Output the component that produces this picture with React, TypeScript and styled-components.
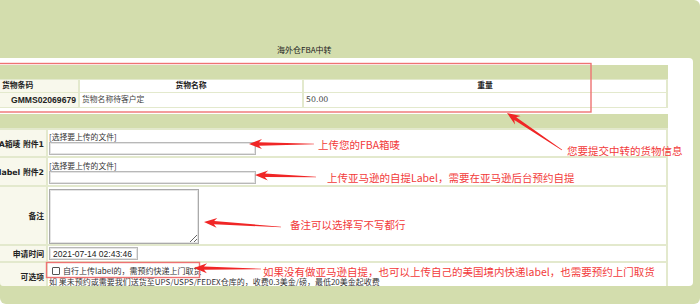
import React from 'react';
import styled, { createGlobalStyle } from 'styled-components';

const GREEN = '#d3ddad';
const LINE = '#e3e9cd';
const CREAM = '#f8f8ec';
const RED = '#f23a3a';

const GlobalStyle = createGlobalStyle`
	html, body { margin: 0; padding: 0; background: #fff; overflow: hidden; }
	body { font-family: "DejaVu Sans", "Noto Sans CJK SC", sans-serif; }
`;

const Frame = styled.div`
	position: relative;
	width: 700px;
	height: 304px;
	background: ${GREEN};
	border-radius: 0 6px 6px 6px;
	overflow: hidden;
`;

const TitleBar = styled.div`
	height: 58px;
	box-sizing: border-box;
	display: flex;
	align-items: flex-end;
	padding: 0 0 3px 277px;
`;

const Title = styled.span`
	font-family: "Noto Sans CJK SC", sans-serif;
	font-size: 8px;
	line-height: 10px;
	color: #222;
`;

const Panel = styled.div`
	width: 693px;
	height: 228px;
	box-sizing: border-box;
	padding-top: 7px;
	background: #fff;
	border-radius: 0 4px 4px 4px;
	overflow: hidden;
`;

const Grid = styled.div<{ $cols: string; $gap: number; $top: number }>`
	display: grid;
	grid-template-columns: ${(p) => p.$cols};
	gap: ${(p) => p.$gap}px 2px;
	width: 668px;
	box-sizing: border-box;
	margin-top: ${(p) => p.$top}px;
	padding: 0 2px 1px 0;
	background: ${LINE};
	font-size: 7.8px;
	color: #333;
`;

const Caption = styled.div`
	grid-column: 1 / -1;
	height: 14px;
	margin-right: -2px;
	background: ${GREEN};
`;

const Cell = styled.div<{ $h: number; $align?: string; $bold?: boolean; $cream?: boolean }>`
	height: ${(p) => p.$h}px;
	line-height: ${(p) => p.$h}px;
	padding: 0 2px;
	text-align: ${(p) => p.$align || 'left'};
	font-weight: ${(p) => (p.$bold ? 'bold' : 'normal')};
	background: ${(p) => (p.$cream ? CREAM : '#fff')};
	color: ${(p) => (p.$bold ? '#222' : '#444')};
	white-space: nowrap;
`;

const Code = styled.span`
	font-family: "Liberation Sans", sans-serif;
	font-size: 8.6px;
`;

const Label = styled.div<{ $h: number }>`
	height: ${(p) => p.$h}px;
	display: flex;
	justify-content: flex-end;
	align-items: center;
	padding-right: 2px;
	background: ${CREAM};
	font-weight: bold;
	color: #222;
	white-space: nowrap;
`;

const Field = styled.div<{ $h: number; $pad: number }>`
	height: ${(p) => p.$h}px;
	box-sizing: border-box;
	padding: ${(p) => p.$pad}px 0 0 1px;
	display: flex;
	flex-direction: column;
	align-items: flex-start;
	background: #fff;
`;

const Hint = styled.span`
	font-family: "Noto Sans CJK SC", sans-serif;
	line-height: 10px;
	color: #333;
`;

const Box = styled.input<{ $w: number }>`
	width: ${(p) => p.$w}px;
	height: 13px;
	box-sizing: border-box;
	margin: 0;
	padding: 0 3px;
	border: 1px solid #b8b8b8;
	box-shadow: inset 0 0 0 1px #e4e4e4;
	font-family: "Liberation Sans", sans-serif;
	font-size: 8.5px;
	color: #222;
	outline: none;
`;

const Memo = styled.textarea`
	width: 150px;
	height: 55px;
	box-sizing: border-box;
	margin: 0;
	border: 1px solid #aaa;
	box-shadow: inset 0 0 0 1px #e4e4e4;
	outline: none;
`;

const OptionLine = styled.div`
	display: flex;
	align-items: center;
	height: 11px;
	white-space: nowrap;
	font-family: "Noto Sans CJK SC", "DejaVu Sans", sans-serif;
	font-size: 8px;
`;

const Check = styled.input`
	appearance: none;
	width: 8px;
	height: 8px;
	margin: 0 3px 0 3px;
	border: 1px solid #555;
	border-radius: 1px;
	background: #fff;
`;

const Overlay = styled.div`
	position: absolute;
	inset: 0;
	pointer-events: none;
`;

const Note = styled.span<{ $x: number; $y: number }>`
	position: absolute;
	left: ${(p) => p.$x}px;
	top: ${(p) => p.$y - 7}px;
	font-family: "Noto Sans CJK SC", sans-serif;
	font-size: 10.5px;
	line-height: 14px;
	color: ${RED};
	white-space: nowrap;
`;

type Pt = [number, number];

// tapered arrow, like the ones drawn by screenshot tools
const arrowPoints = (tail: Pt, tip: Pt, head = 13, wing = 5, shaft = 1.7) => {
	const [x1, y1] = tail;
	const [x2, y2] = tip;
	const len = Math.hypot(x2 - x1, y2 - y1);
	const ux = (x2 - x1) / len;
	const uy = (y2 - y1) / len;
	const nx = -uy;
	const ny = ux;
	const bx = x2 - ux * head;
	const by = y2 - uy * head;
	const cx = x2 - ux * (head - 3);
	const cy = y2 - uy * (head - 3);
	const pts: Pt[] = [
		[x1 + nx * 0.3, y1 + ny * 0.3],
		[cx + nx * shaft, cy + ny * shaft],
		[bx + nx * wing, by + ny * wing],
		[x2, y2],
		[bx - nx * wing, by - ny * wing],
		[cx - nx * shaft, cy - ny * shaft],
		[x1 - nx * 0.3, y1 - ny * 0.3],
	];
	return pts.map((p) => p.map((v) => v.toFixed(1)).join(',')).join(' ');
};

const arrows: [Pt, Pt][] = [
	[[562, 150], [507, 113]],
	[[314, 144], [249, 144]],
	[[316, 177], [255, 175]],
	[[281, 227], [204, 222]],
	[[261, 269], [194, 268]],
];

const notes = [
	{ x: 318, y: 145, text: '上传您的FBA箱唛' },
	{ x: 327, y: 178, text: '上传亚马逊的自提Label，需要在亚马逊后台预约自提' },
	{ x: 290, y: 225, text: '备注可以选择写不写都行' },
	{ x: 567, y: 151, text: '您要提交中转的货物信息' },
	{ x: 263, y: 272, text: '如果没有做亚马逊自提，也可以上传自己的美国境内快递label，也需要预约上门取货' },
];

export default function App() {
	return (
		<>
			<GlobalStyle />
			<Frame>
				<TitleBar>
					<Title>海外仓FBA中转</Title>
				</TitleBar>
				<Panel>
					<Grid $cols="78px 222px 1fr" $gap={1} $top={0}>
						<Caption />
						<Cell $h={12} $bold $cream>货物条码</Cell>
						<Cell $h={12} $bold $align="center">货物名称</Cell>
						<Cell $h={12} $bold $align="center">重量</Cell>
						<Cell $h={14} $bold $cream $align="right">
							<Code>GMMS02069679</Code>
						</Cell>
						<Cell $h={14}>货物名称待客户定</Cell>
						<Cell $h={14}>50.00</Cell>
					</Grid>

					<Grid $cols="46px 1fr" $gap={2} $top={6}>
						<Caption />
						<Label $h={26}>FBA箱唛 附件1</Label>
						<Field $h={26} $pad={2}>
							<Hint>[选择要上传的文件]</Hint>
							<Box $w={207} readOnly />
						</Field>
						<Label $h={27}>自提label 附件2</Label>
						<Field $h={27} $pad={3}>
							<Hint>[选择要上传的文件]</Hint>
							<Box $w={207} readOnly />
						</Field>
						<Label $h={57}>备注</Label>
						<Field $h={57} $pad={2}>
							<Memo />
						</Field>
						<Label $h={15}>申请时间</Label>
						<Field $h={15} $pad={1}>
							<Box $w={89} readOnly value="2021-07-14 02:43:46" />
						</Field>
						<Label $h={26}>可选项</Label>
						<Field $h={30} $pad={2}>
							<OptionLine>
								<Check type="checkbox" />
								自行上传label的，需预约快递上门取货
							</OptionLine>
							<OptionLine>如 果未预约或需要我们送货至UPS/USPS/FEDEX仓库的，收费0.3美金/磅，最低20美金起收费</OptionLine>
						</Field>
					</Grid>
				</Panel>

				<Overlay>
					<svg width="700" height="304" viewBox="0 0 700 304">
						<rect x="-4" y="63.5" width="595" height="48.5" fill="none" stroke="#ee7272" strokeWidth="1.4" />
						<rect x="46.5" y="262.5" width="153" height="15" fill="none" stroke="#ee7272" strokeWidth="1.4" />
						{arrows.map(([tail, tip], i) => (
							<polygon key={i} points={arrowPoints(tail, tip)} fill="#f02626" />
						))}
					</svg>
					{notes.map((n) => (
						<Note key={n.text} $x={n.x} $y={n.y}>
							{n.text}
						</Note>
					))}
				</Overlay>
			</Frame>
		</>
	);
}
